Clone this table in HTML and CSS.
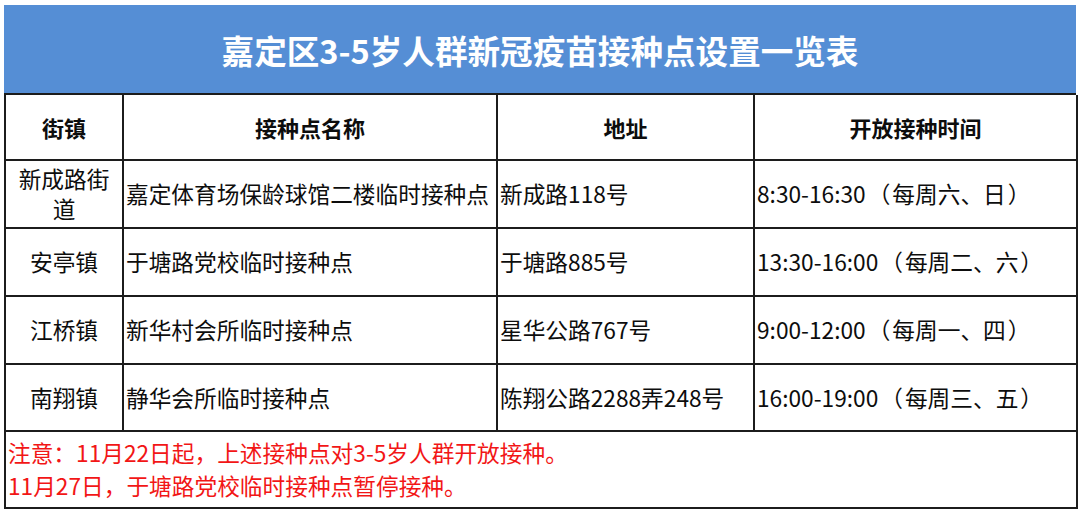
FILE: index.html
```html
<!DOCTYPE html>
<html lang="zh-CN">
<head>
<meta charset="utf-8">
<title>嘉定区3-5岁人群新冠疫苗接种点设置一览表</title>
<link rel="stylesheet" href="styles.css">
</head>
<body>
<div class="sheet">
  <div class="title">嘉定区3-5岁人群新冠疫苗接种点设置一览表</div>
  <div class="grid">
    <div class="cell head center">街镇</div>
    <div class="cell head center">接种点名称</div>
    <div class="cell head center">地址</div>
    <div class="cell head center">开放接种时间</div>

    <div class="cell center town">新成路街道</div>
    <div class="cell">嘉定体育场保龄球馆二楼临时接种点</div>
    <div class="cell">新成路118号</div>
    <div class="cell">8:30-16:30<span class="po">（</span>每周六、日<span class="pc">）</span></div>

    <div class="cell center town">安亭镇</div>
    <div class="cell">于塘路党校临时接种点</div>
    <div class="cell">于塘路885号</div>
    <div class="cell">13:30-16:00<span class="po">（</span>每周二、六<span class="pc">）</span></div>

    <div class="cell center town">江桥镇</div>
    <div class="cell">新华村会所临时接种点</div>
    <div class="cell">星华公路767号</div>
    <div class="cell">9:00-12:00<span class="po">（</span>每周一、四<span class="pc">）</span></div>

    <div class="cell center town">南翔镇</div>
    <div class="cell">静华会所临时接种点</div>
    <div class="cell">陈翔公路2288弄248号</div>
    <div class="cell">16:00-19:00<span class="po">（</span>每周三、五<span class="pc">）</span></div>

    <div class="cell notes">注意：11月22日起，上述接种点对3-5岁人群开放接种。<br>11月27日，于塘路党校临时接种点暂停接种。</div>
  </div>
</div>
</body>
</html>
```

FILE: styles.css
```css
html, body {
  margin: 0;
  padding: 0;
  background: #ffffff;
}

body {
  font-family: "Noto Sans CJK SC", "Noto Sans", sans-serif;
  color: #0d0d0d;
}

.sheet {
  width: 1072px;
  margin: 5px 0 0 4px;
}

.title {
  height: 88px;
  background: #558ed5;
  color: #ffffff;
  font-weight: 700;
  font-size: 32.6px;
  display: flex;
  align-items: center;
  justify-content: center;
}

.grid {
  display: grid;
  grid-template-columns: 118px 374px 257px 323px;
  grid-template-rows: 66px 68px 68px 68px 67px 77px;
  border-top: 2px solid #1c1c1c;
  border-left: 2px solid #1c1c1c;
  box-sizing: border-box;
}

.cell {
  border-right: 2px solid #1c1c1c;
  border-bottom: 2px solid #1c1c1c;
  font-size: 22.7px;
  line-height: 30px;
  display: flex;
  align-items: center;
  padding: 0 2px;
  box-sizing: border-box;
  white-space: nowrap;
}

.center {
  justify-content: center;
  text-align: center;
}

.town {
  white-space: normal;
  padding: 0 9px;
}

.head {
  font-weight: 700;
  font-size: 22px;
}

.po {
  margin-left: 2px;
  margin-right: 2px;
}

.pc {
  margin-left: 2px;
}

.notes {
  grid-column: 1 / -1;
  display: block;
  color: #f21616;
  line-height: 33px;
  padding: 4px 2px 0 2px;
}
```
